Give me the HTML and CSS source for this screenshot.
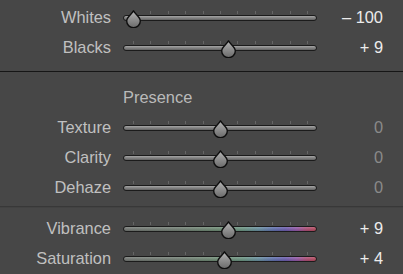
FILE: index.html
```html
<!DOCTYPE html>
<html>
<head>
<meta charset="utf-8">
<link rel="stylesheet" href="styles.css">
</head>
<body>
<svg width="0" height="0" class="defs">
  <defs>
    <linearGradient id="tg" x1="0" y1="0" x2="0" y2="1">
      <stop offset="0" stop-color="#b8b8b8"/>
      <stop offset="0.45" stop-color="#929292"/>
      <stop offset="1" stop-color="#6a6a6a"/>
    </linearGradient>
    <symbol id="thumb" viewBox="0 0 15 18">
      <path d="M7.5 0.8 C8.8 4.2 14.3 6.8 14.3 10.9 A6.8 6.8 0 0 1 0.7 10.9 C0.7 6.8 6.2 4.2 7.5 0.8 Z" fill="url(#tg)" stroke="#0e0e0e" stroke-width="1.4" stroke-linejoin="round"/>
    </symbol>
  </defs>
</svg>
<div class="panel">
  <div class="group top">
    <div class="row">
      <span class="label">Whites</span>
      <div class="slider" style="--v:-100">
        <div class="ticks"><i></i><i></i><i></i><i></i><i></i><i></i><i></i><i></i><i></i><i></i><i></i></div>
        <div class="track"></div>
        <svg class="thumb"><use href="#thumb"/></svg>
      </div>
      <span class="value">– 100</span>
    </div>
    <div class="row">
      <span class="label">Blacks</span>
      <div class="slider" style="--v:9">
        <div class="ticks"><i></i><i></i><i></i><i></i><i></i><i></i><i></i><i></i><i></i><i></i><i></i></div>
        <div class="track"></div>
        <svg class="thumb"><use href="#thumb"/></svg>
      </div>
      <span class="value">+ 9</span>
    </div>
  </div>
  <div class="sep dark"></div>
  <div class="group presence">
    <div class="row header">
      <span class="heading">Presence</span>
    </div>
    <div class="row">
      <span class="label">Texture</span>
      <div class="slider" style="--v:0">
        <div class="ticks"><i></i><i></i><i></i><i></i><i></i><i></i><i></i><i></i><i></i><i></i><i></i></div>
        <div class="track"></div>
        <svg class="thumb"><use href="#thumb"/></svg>
      </div>
      <span class="value zero">0</span>
    </div>
    <div class="row">
      <span class="label">Clarity</span>
      <div class="slider" style="--v:0">
        <div class="ticks"><i></i><i></i><i></i><i></i><i></i><i></i><i></i><i></i><i></i><i></i><i></i></div>
        <div class="track"></div>
        <svg class="thumb"><use href="#thumb"/></svg>
      </div>
      <span class="value zero">0</span>
    </div>
    <div class="row">
      <span class="label">Dehaze</span>
      <div class="slider" style="--v:0">
        <div class="ticks"><i></i><i></i><i></i><i></i><i></i><i></i><i></i><i></i><i></i><i></i><i></i></div>
        <div class="track"></div>
        <svg class="thumb"><use href="#thumb"/></svg>
      </div>
      <span class="value zero">0</span>
    </div>
  </div>
  <div class="sep soft"></div>
  <div class="group color">
    <div class="row">
      <span class="label">Vibrance</span>
      <div class="slider" style="--v:9">
        <div class="ticks"><i></i><i></i><i></i><i></i><i></i><i></i><i></i><i></i><i></i><i></i><i></i></div>
        <div class="track hue"></div>
        <svg class="thumb"><use href="#thumb"/></svg>
      </div>
      <span class="value">+ 9</span>
    </div>
    <div class="row">
      <span class="label">Saturation</span>
      <div class="slider" style="--v:4">
        <div class="ticks"><i></i><i></i><i></i><i></i><i></i><i></i><i></i><i></i><i></i><i></i><i></i></div>
        <div class="track hue"></div>
        <svg class="thumb"><use href="#thumb"/></svg>
      </div>
      <span class="value">+ 4</span>
    </div>
  </div>
</div>
</body>
</html>
```

FILE: styles.css
```css
html, body {
  margin: 0;
  padding: 0;
  background: #474747;
}
body {
  width: 403px;
  height: 274px;
  overflow: hidden;
  font-family: "Liberation Sans", Arial, sans-serif;
  font-size: 16.4px;
}
.defs {
  position: absolute;
  width: 0;
  height: 0;
}
.panel {
  display: flex;
  flex-direction: column;
  padding-top: 2px;
}
.row {
  display: grid;
  grid-template-columns: 111px 194px 54px;
  column-gap: 12px;
  height: 30px;
  line-height: 30px;
}
.label {
  text-align: right;
  color: #c0c0c0;
  white-space: nowrap;
}
.heading {
  grid-column: 2;
  color: #bababa;
}
.value {
  text-align: right;
  color: #ececec;
  white-space: nowrap;
}
.value.zero {
  color: #8a8a8a;
}
.slider {
  position: relative;
  display: flex;
  flex-direction: column;
  padding-top: 9px;
  box-sizing: border-box;
}
.ticks {
  display: flex;
  justify-content: space-between;
  padding: 0 9px 0 10px;
  height: 3px;
  margin-bottom: 1px;
}
.ticks i {
  display: block;
  width: 1px;
  height: 3px;
  background: #656565;
}
.track {
  height: 6px;
  box-sizing: border-box;
  border: 1px solid #1b1b1b;
  border-radius: 3px;
  background: linear-gradient(#a6a6a6 0, #8e8e8e 30%, #767676 70%, #606060 100%);
}
.track.hue {
  background:
    linear-gradient(rgba(255,255,255,0.18), rgba(0,0,0,0.15)),
    linear-gradient(90deg, #737773 0%, #717f73 30%, #6d8d74 50%, #6a9582 62%, #6790a0 70%, #5f70b0 78%, #6a5cb0 84%, #9456a8 90%, #b04c74 95%, #b8485a 100%);
}
.thumb {
  position: absolute;
  top: 8px;
  left: calc(90px + var(--v) * 0.875px);
  width: 15px;
  height: 18px;
  overflow: visible;
}
.sep {
  height: 1px;
}
.sep.dark {
  margin-top: 9px;
  background: #161616;
}
.presence {
  margin-top: 10px;
}
.sep.soft {
  margin-top: 4px;
  background: #383838;
  border-bottom: 1px solid #424242;
}
.color {
  margin-top: 5px;
}
```
